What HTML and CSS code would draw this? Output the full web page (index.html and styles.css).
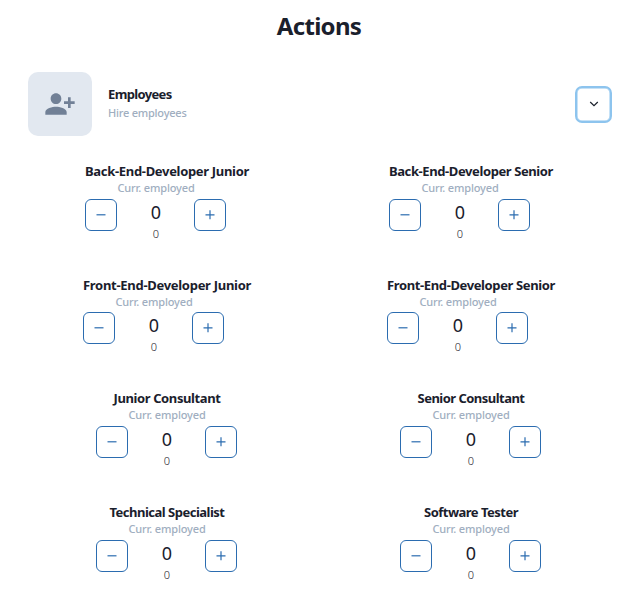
FILE: index.html
```html
<!DOCTYPE html>
<html lang="en">
<head>
<meta charset="utf-8">
<title>Actions</title>
<link rel="stylesheet" href="styles.css">
</head>
<body>
<main class="panel">
  <h1 class="heading">Actions</h1>
  <header class="group">
    <div class="tile">
      <svg width="32" height="32" viewBox="0 0 24 24" fill="currentColor"><path d="M13 8c0-2.210-1.790-4-4-4S5 5.790 5 8s1.790 4 4 4 4-1.790 4-4zm2 2v2h3v3h2v-3h3v-2h-3V7h-2v3h-3zM1 18v2h16v-2c0-2.660-5.330-4-8-4s-8 1.340-8 4z"/></svg>
    </div>
    <div class="group-text">
      <h2 class="group-title">Employees</h2>
      <p class="group-sub">Hire employees</p>
    </div>
    <button class="toggle" aria-label="Collapse"><svg width="10" height="6" viewBox="0 0 10 6"><path d="M1.200 1 5 4.600 8.800 1" fill="none" stroke="currentColor" stroke-width="1.200"/></svg></button>
  </header>
  <div class="roles" id="roles"></div>
</main>
<script src="roles.js"></script>
</body>
</html>
```
FILE: styles.css
```css
* { box-sizing: border-box; }
body { margin: 0; background: #fff; color: #1a202c; font-family: "Noto Sans", "Open Sans", sans-serif; }
h1, h2, h3, p { margin: 0; }
.panel { height: 598px; overflow: hidden; }
.heading { height: 72px; padding-top: 8px; text-align: center; font-size: 24px; line-height: 36px; font-weight: 700; letter-spacing: -0.7px; }
.group { display: flex; align-items: center; padding: 0 26px 0 28px; height: 64px; }
.tile { display: flex; align-items: center; justify-content: center; width: 64px; height: 64px; border-radius: 10px; background: #e2e8f0; color: #718096; }
.group-text { flex: 1; padding: 0 0 4px 16px; }
.group-title { font-size: 13px; line-height: 20px; font-weight: 700; letter-spacing: -0.65px; }
.group-sub { font-size: 11px; line-height: 17px; font-weight: 500; letter-spacing: -0.220px; color: #a0aec0; }
.toggle { display: flex; align-items: center; justify-content: center; width: 37px; height: 37px; padding: 0; border: 2px solid #8dc4ee; border-radius: 7px; background: #fff; color: #1a202c; box-shadow: inset 0 0 0 0.500px #8dc4ee; }
.roles { display: grid; grid-template-columns: 304px 304px; grid-auto-rows: 113.600px; padding: 26px 15px 0; }
.role { justify-self: center; min-width: 142px; }
.role-title { display: flex; justify-content: center; height: 18px; font-size: 13px; line-height: 18px; font-weight: 700; white-space: nowrap; }
.role-body { width: 141px; text-align: center; }
.role-caption { height: 18.800px; padding-left: 1px; font-size: 11px; line-height: 16px; font-weight: 500; letter-spacing: -0.150px; color: #a0aec0; }
.stepper { display: flex; justify-content: space-between; height: 26px; }
.step { display: flex; align-items: center; justify-content: center; width: 32px; height: 32px; padding: 0; border: 1px solid #2b6cb0; border-radius: 6px; background: #fff; color: #2b6cb0; }
.value { padding-left: 1px; font-size: 18px; line-height: 27px; }
.total { padding-left: 1px; font-size: 11px; line-height: 18px; font-weight: 300; }
```
FILE: roles.js
```js
const roles = [
  ["Back-End-Developer Junior", 164],
  ["Back-End-Developer Senior", 164],
  ["Front-End-Developer Junior", 168],
  ["Front-End-Developer Senior", 168],
  ["Junior Consultant", 107],
  ["Senior Consultant", 107],
  ["Technical Specialist", 115],
  ["Software Tester", 94]
];
const icon = d => `<svg width="10" height="10" viewBox="0 0 10 10"><path d="${d}" fill="none" stroke="currentColor" stroke-width="1.2"/></svg>`;
const list = document.getElementById("roles");
for (const [name, width] of roles) {
  const role = document.createElement("section");
  role.className = "role";
  role.innerHTML = `<h3 class="role-title"><span>${name}</span></h3>
    <div class="role-body">
      <p class="role-caption">Curr. employed</p>
      <div class="stepper">
        <button class="step" aria-label="Decrease">${icon("M.5 4.800h9")}</button>
        <span class="value">0</span>
        <button class="step" aria-label="Increase">${icon("M.5 4.800h9M5 .3v9")}</button>
      </div>
      <p class="total">0</p>
    </div>`;
  list.append(role);
  const label = role.querySelector("span");
  const spacing = (width - label.getBoundingClientRect().width) / name.length;
  label.style.letterSpacing = spacing + "px";
}
```
